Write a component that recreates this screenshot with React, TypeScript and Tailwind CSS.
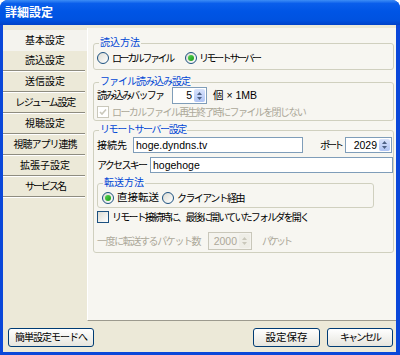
const tabs = [
  { t: "基本設定", k: "tracking-[0px]" },
  { t: "読込設定", k: "tracking-[0px]" },
  { t: "送信設定", k: "tracking-[0px]" },
  { t: "レジューム設定", k: "tracking-[-1.3px]" },
  { t: "視聴設定", k: "tracking-[0px]" },
  { t: "視聴アプリ連携", k: "tracking-[-1px]" },
  { t: "拡張子設定", k: "tracking-[0px]" },
  { t: "サービス名", k: "tracking-[-2px]" },
];

function Radio({ checked }: { checked?: boolean }) {
  return (
    <span className="w-[12px] h-[12px] rounded-full border border-[#1C5180] bg-gradient-to-br from-[#DCDCD4] to-white flex items-center justify-center shrink-0">
      {checked && <span className="w-[6px] h-[6px] rounded-full bg-gradient-to-br from-[#55D451] to-[#139B13]" />}
    </span>
  );
}

function Check({ checked, disabled }: { checked?: boolean; disabled?: boolean }) {
  return (
    <span
      className={
        disabled
          ? "w-[12px] h-[12px] border border-[#CAC8BB] bg-white flex items-center justify-center shrink-0"
          : "w-[12px] h-[12px] border border-[#1C5180] bg-gradient-to-br from-[#DCDCD4] to-white flex items-center justify-center shrink-0"
      }
    >
      {checked && (
        <svg width="8" height="8" viewBox="0 0 8 8">
          <polyline points="1,4 3,6 7,1.5" fill="none" stroke={disabled ? "#CAC8BB" : "#21A121"} strokeWidth="1.6" />
        </svg>
      )}
    </span>
  );
}

function Spinner({ value, w, disabled }: { value: string; w: string; disabled?: boolean }) {
  return (
    <div className={`${w} h-full shrink-0 flex items-center border text-[10.5px] ${disabled ? "border-[#C9C7BA] bg-[#F4F3EE] text-[#ACA899]" : "border-[#7F9DB9] bg-white text-black"}`}>
      <span className="flex-1 text-right pr-[2px] leading-none">{value}</span>
      <span className={`w-[11px] h-[calc(100%-2px)] mr-[1px] rounded-[2px] flex flex-col items-center justify-center gap-[2px] ${disabled ? "bg-[#EEEDE6]" : "bg-gradient-to-b from-[#D9E3FB] to-[#AFC4F4]"}`}>
        <svg width="5" height="3" viewBox="0 0 5 3"><polygon points="0,3 2.5,0 5,3" fill={disabled ? "#C9C7BA" : "#4D6185"} /></svg>
        <svg width="5" height="3" viewBox="0 0 5 3"><polygon points="0,0 2.5,3 5,0" fill={disabled ? "#C9C7BA" : "#4D6185"} /></svg>
      </span>
    </div>
  );
}

function XPButton({ label, w, k }: { label: string; w: string; k: string }) {
  return (
    <button className={`${w} h-[19px] border border-[#003C74] rounded-[3px] bg-gradient-to-b from-white to-[#E6E5DE] flex items-center justify-center leading-none ${k}`}>
      {label}
    </button>
  );
}

export default function App() {
  return (
    <div className="w-[400px] h-[355px] flex flex-col bg-[#0A47D9] rounded-t-[8px] overflow-hidden whitespace-nowrap text-[10px] text-black font-['Liberation_Sans','Noto_Sans_CJK_JP',sans-serif]">
      <div className="h-[25px] shrink-0 flex items-center pl-[5px] text-white font-bold text-[12px] bg-[linear-gradient(to_bottom,#3D8DF6_0%,#0A5EEB_14%,#0055E5_45%,#0052E0_80%,#0042C8_100%)]">
        詳細設定
      </div>
      <div className="flex-1 ml-[3px] mr-[4px] mb-[3px] bg-[#ECE9D8] flex flex-col">
        <div className="flex pt-[3px]">
          <div className="w-[84px] pt-[2px] flex flex-col">
            {tabs.map((tab, i) => (
              <div key={tab.t} className={`h-[21px] flex flex-col ${i === 0 ? "bg-[#F4F3EE]" : ""}`}>
                <div className={`flex-1 flex items-center justify-center leading-none ${tab.k}`}>{tab.t}</div>
                {i > 0 && (
                  <div className="mr-[2px]">
                    <div className="h-px bg-[#8E8C80]" />
                    <div className="h-px bg-white" />
                  </div>
                )}
              </div>
            ))}
          </div>
          <div className="flex-1 h-[293px] bg-[#F7F6F1] border-l border-white border-b border-b-[#9C9A8E] pl-[5px] pr-[2px] pt-[9px]">
            <fieldset className="border border-[#D0D0BF] rounded-[3px] pl-[3px] pr-[1px] pb-[4px]">
              <legend className="ml-[2px] px-[1px] leading-[12px] text-[#0046D5]">読込方法</legend>
              <div className="mt-[2px] h-[14px] flex items-center">
                <div className="w-[88px] shrink-0 flex items-center gap-[3px]"><Radio /><span className="tracking-[-2.4px]">ローカルファイル</span></div>
                <div className="flex items-center gap-[2px]"><Radio checked /><span className="tracking-[-2.4px]">リモートサーバー</span></div>
              </div>
            </fieldset>

            <fieldset className="mt-[6px] border border-[#D0D0BF] rounded-[3px] pl-[3px] pr-[1px] pb-[1px]">
              <legend className="ml-[2px] px-[1px] leading-[12px] text-[#0046D5] tracking-[-1px]">ファイル読み込み設定</legend>
              <div className="-mt-[1px] h-[17px] flex items-center">
                <span className="w-[75px] shrink-0 tracking-[-1.7px]">読み込みバッファ</span>
                <Spinner value="5" w="w-[35px]" />
                <span className="ml-[6px] text-[10.5px]">個 × 1MB</span>
              </div>
              <div className="mt-[1px] h-[14px] flex items-center gap-[3px] text-[#ACA899]">
                <Check checked disabled />
                <span className="tracking-[-1.6px]">ローカルファイル再生終了時にファイルを閉じない</span>
              </div>
            </fieldset>

            <fieldset className="mt-[3px] border border-[#D0D0BF] rounded-[3px] pl-[3px] pr-[0px] pb-[2px]">
              <legend className="ml-[2px] px-[1px] leading-[12px] text-[#0046D5] tracking-[-1.4px]">リモートサーバー設定</legend>
              <div className="mt-[1px] h-[16px] flex items-center">
                <span className="w-[36px] shrink-0">接続先</span>
                <div className="w-[170px] shrink-0 h-full border border-[#7F9DB9] bg-white flex items-center pl-[2px] leading-none text-[10.5px]">hoge.dyndns.tv</div>
                <span className="ml-[17px] w-[25px] shrink-0 tracking-[-3px]">ポート</span>
                <Spinner value="2029" w="w-[47px]" />
              </div>
              <div className="mt-[4px] h-[16px] flex items-center">
                <span className="w-[53px] shrink-0 tracking-[-1.7px]">アクセスキー</span>
                <div className="flex-1 h-full border border-[#7F9DB9] bg-white flex items-center pl-[2px] leading-none text-[10.5px]">hogehoge</div>
              </div>
              <fieldset className="mt-[4px] w-[277px] border border-[#D0D0BF] rounded-[3px] pl-[4px] pb-[2px]">
                <legend className="ml-[1px] px-[1px] leading-[12px] text-[#0046D5]">転送方法</legend>
                <div className="mt-[2px] h-[14px] flex items-center">
                  <div className="w-[60px] shrink-0 flex items-center gap-[3px]"><Radio checked /><span className="text-[10.5px]">直接転送</span></div>
                  <div className="flex items-center gap-[3px]"><Radio /><span className="tracking-[-1.6px]">クライアント経由</span></div>
                </div>
              </fieldset>
              <div className="mt-[2px] h-[14px] flex items-center gap-[3px]">
                <Check />
                <span className="tracking-[-1.8px]">リモート接続時に、最後に開いていたフォルダを開く</span>
              </div>
              <div className="mt-[8px] h-[18px] flex items-center text-[#ACA899]">
                <span className="w-[111px] shrink-0 tracking-[-1.4px]">一度に転送するパケット数</span>
                <Spinner value="2000" w="w-[44px]" disabled />
                <span className="ml-[10px] tracking-[-3px]">パケット</span>
              </div>
            </fieldset>
          </div>
        </div>
        <div className="mt-[7px] flex items-center pl-[5px] pr-[3px]">
          <XPButton label="簡単設定モードへ" w="w-[86px]" k="tracking-[-1px]" />
          <div className="flex-1" />
          <XPButton label="設定保存" w="w-[67px]" k="text-[10.5px]" />
          <div className="w-[7px]" />
          <XPButton label="キャンセル" w="w-[66px]" k="tracking-[-2px]" />
        </div>
      </div>
    </div>
  );
}
